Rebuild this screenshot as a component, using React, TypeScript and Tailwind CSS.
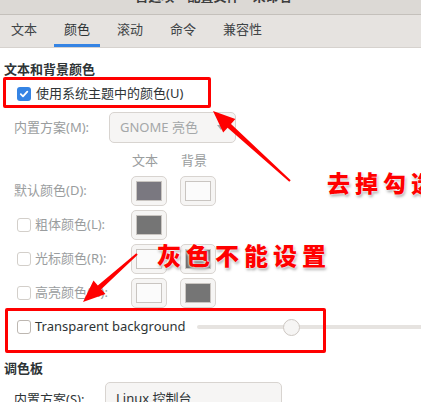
import React from "react";

const tabs = ["文本", "颜色", "滚动", "命令", "兼容性"];

const Check = ({ checked = false, disabled = false }: { checked?: boolean; disabled?: boolean }) =>
  checked ? (
    <span className="flex items-center justify-center w-[14px] h-[14px] rounded-[3px] bg-[#3584e4] shrink-0">
      <svg width="10" height="10" viewBox="0 0 10 10" fill="none">
        <path d="M1.8 5.2 4 7.3 8.3 2.6" stroke="#fff" strokeWidth="1.8" strokeLinecap="round" strokeLinejoin="round" />
      </svg>
    </span>
  ) : (
    <span
      className={`block w-[14px] h-[14px] rounded-[3px] border bg-white shrink-0 ${
        disabled ? "border-[#d3cfca]" : "border-[#bdb7b1]"
      }`}
    />
  );

const Swatch = ({ color }: { color: string }) => (
  <div className="w-[36px] h-[30px] rounded-[5px] border border-[#d8d4d0] bg-[#f6f5f4] p-[4px]">
    <div className="w-full h-full border border-[#c9c5c1]" style={{ background: color }} />
  </div>
);

const ColorRow = ({
  label,
  check,
  text,
  bg,
}: {
  label: string;
  check?: boolean;
  text: string;
  bg?: string;
}) => (
  <div className="flex items-center h-[34px]">
    <div className="flex items-center w-[131px] text-[13px] text-[#9a9d9e]">
      {check ? (
        <div className="flex items-center gap-[4px] pl-[17px]">
          <Check disabled />
          <span>{label}</span>
        </div>
      ) : (
        <span className="pl-[14px]">{label}</span>
      )}
    </div>
    <Swatch color={text} />
    {bg && (
      <div className="ml-[13px]">
        <Swatch color={bg} />
      </div>
    )}
  </div>
);

export default function App() {
  return (
    <div
      className="relative w-[421px] h-[402px] overflow-hidden bg-white text-[#2e3436]"
      style={{ fontFamily: '"Noto Sans", "Noto Sans CJK SC", sans-serif' }}
    >
      {/* title bar, mostly cut off */}
      <div className="h-[15px] bg-[#dcd9d5] border-b border-[#c4c0bb] overflow-hidden flex justify-center">
        <div className="mt-[-12px] text-[13px] leading-[16px] font-bold text-[#3d3d3d] pl-[6px]">
          首选项 – 配置文件 – 未命名
        </div>
      </div>

      {/* tabs */}
      <div className="flex h-[33px] bg-[#e6e3e0] border-b border-[#d6d2ce] pl-[1px] gap-[7px]">
        {tabs.map((t, i) => (
          <div
            key={t}
            className={`flex items-center px-[10px] text-[13px] border-b-[3px] ${
              i === 1 ? "border-[#3584e4] text-[#2e3436]" : "border-transparent text-[#3f4446]"
            }`}
          >
            {t}
          </div>
        ))}
      </div>

      <div className="flex flex-col">
        <div className="mt-[13px] h-[16px] pl-[4px] text-[13px] leading-[16px] font-bold">文本和背景颜色</div>

        <div className="flex items-center h-[30px] mt-[2px] pl-[17px] gap-[5px] text-[13px]">
          <Check checked />
          <span>使用系统主题中的颜色(U)</span>
        </div>

        <div className="flex items-center h-[31px] mt-[3px]">
          <span className="w-[109px] pl-[14px] text-[13px] text-[#9a9d9e]">内置方案(M):</span>
          <div className="flex items-center justify-between w-[127px] h-full rounded-[5px] border border-[#d8d4d0] bg-[#f6f5f4] px-[10px] text-[13px] text-[#a4a7a8]">
            <span>GNOME 亮色</span>
            <svg width="8" height="6" viewBox="0 0 8 6">
              <path d="M0 0h8L4 5z" fill="#a9a9a9" />
            </svg>
          </div>
        </div>

        <div className="flex h-[16px] mt-[9px] text-[13px] leading-[16px] text-[#9a9d9e]">
          <span className="pl-[132px]">文本</span>
          <span className="pl-[23px]">背景</span>
        </div>

        <div className="flex flex-col mt-[6px]">
          <ColorRow label="默认颜色(D):" text="#7a7880" bg="#fbfbfb" />
          <ColorRow label="粗体颜色(L):" check text="#757575" />
          <ColorRow label="光标颜色(R):" check text="#fbfbfb" bg="#6f6f6f" />
          <ColorRow label="高亮颜色(H):" check text="#fbfbfb" bg="#757575" />
        </div>

        <div className="flex items-center h-[34px]">
          <div className="flex items-center gap-[4px] pl-[17px] w-[197px] text-[13px]">
            <Check />
            <span>Transparent background</span>
          </div>
          <div className="relative flex-1 flex items-center h-full">
            <div className="w-full h-[4px] rounded-l-full bg-[#e6e3e0]" />
            <div className="absolute left-[86px] top-[9px] w-[17px] h-[17px] rounded-full border border-[#cdc7c2] bg-[#f6f5f4]" />
          </div>
        </div>

        <div className="mt-[16px] h-[16px] pl-[4px] text-[13px] leading-[16px] font-bold">调色板</div>

        <div className="flex items-start h-[31px] mt-[6px]">
          <span className="w-[105px] pl-[14px] pt-[8px] text-[13px] text-[#2e3436]">内置方案(S):</span>
          <div className="w-[177px] h-full rounded-[5px] border border-[#d8d4d0] bg-[#f6f5f4] px-[10px] pt-[6px] text-[13px]">
            Linux 控制台
          </div>
        </div>
      </div>

      {/* annotations */}
      <div className="absolute left-[3px] top-[77px] w-[208px] h-[31px] border-[3px] border-[#ff0000] rounded-[2px]" />
      <div className="absolute left-[5px] top-[308px] w-[321px] h-[45px] border-[3px] border-[#ff0000] rounded-[2px]" />

      <svg className="absolute inset-0 pointer-events-none" width="421" height="402" viewBox="0 0 421 402">
        <polygon
          points="213,111 235.4,119.1 231,124 290.7,180.3 289.3,181.7 227.6,127.7 223.2,132.5"
          fill="#ff0000"
        />
        <polygon
          points="83,302 105.5,294.1 101.2,289.2 137.7,254.75 136.3,253.25 97.8,285.4 93.5,280.6"
          fill="#ff0000"
        />
      </svg>

      <div className="absolute left-[327px] top-[168px] whitespace-nowrap text-[23px] leading-[30px] font-black tracking-[5px] text-[#ff0000] [text-shadow:0_0_2px_#fff,0_0_3px_#fff,1px_2px_3px_#9a9a9a]">
        去掉勾选
      </div>
      <div className="absolute left-[157px] top-[240px] whitespace-nowrap text-[24px] leading-[32px] font-black tracking-[5px] text-[#ff0000] [text-shadow:0_0_2px_#fff,0_0_3px_#fff,1px_2px_3px_#9a9a9a]">
        灰色不能设置
      </div>
    </div>
  );
}
